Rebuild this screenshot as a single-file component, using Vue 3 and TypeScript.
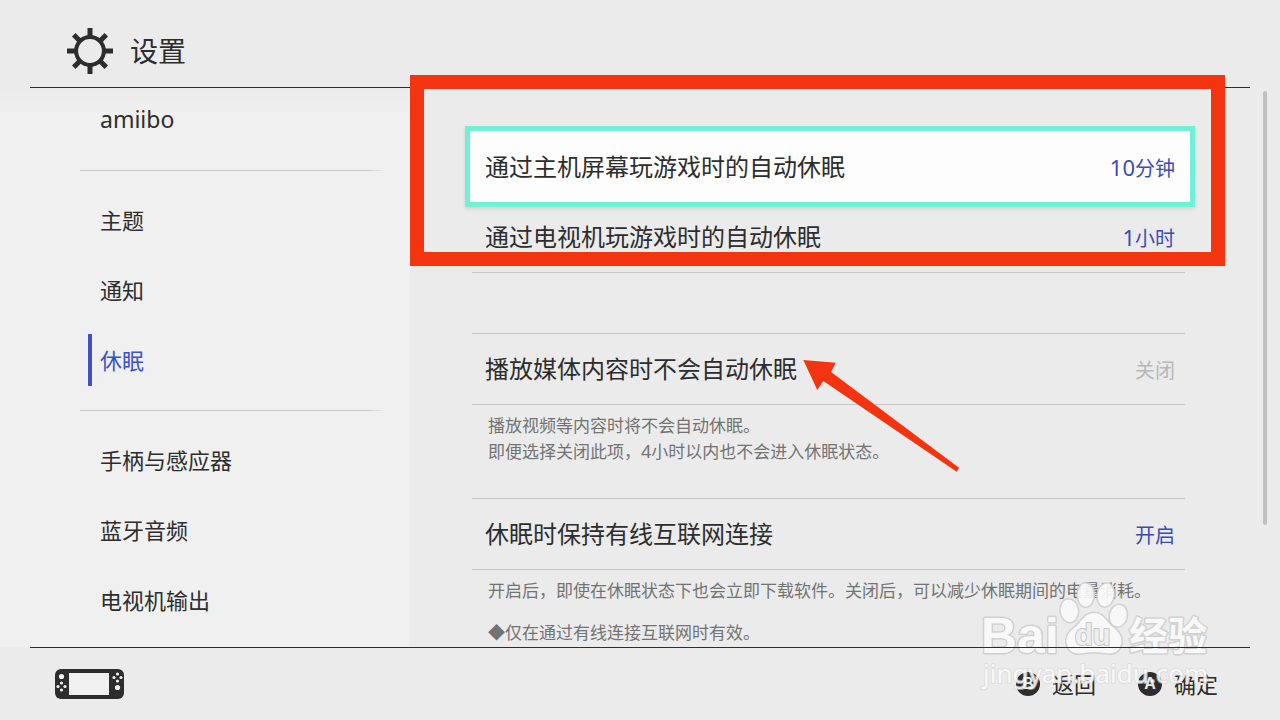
<script setup lang="ts">
interface NavGroup {
  items: { label: string; latin?: boolean; active?: boolean }[]
}

interface Setting {
  label: string
  amount?: string
  value: string
  off?: boolean
  focused?: boolean
  notes?: { before: string; digits?: string; after?: string }[]
  spaced?: boolean
}

const groups: NavGroup[] = [
  { items: [{ label: 'amiibo', latin: true }] },
  { items: [{ label: '主题' }, { label: '通知' }, { label: '休眠', active: true }] },
  { items: [{ label: '手柄与感应器' }, { label: '蓝牙音频' }, { label: '电视机输出' }] },
]

const plain: Setting[] = [
  { label: '通过主机屏幕玩游戏时的自动休眠', amount: '10', value: '分钟', focused: true },
  { label: '通过电视机玩游戏时的自动休眠', amount: '1', value: '小时' },
]

const explained: Setting[] = [
  {
    label: '播放媒体内容时不会自动休眠',
    value: '关闭',
    off: true,
    notes: [
      { before: '播放视频等内容时将不会自动休眠。' },
      { before: '即便选择关闭此项，', digits: '4', after: '小时以内也不会进入休眠状态。' },
    ],
  },
  {
    label: '休眠时保持有线互联网连接',
    value: '开启',
    spaced: true,
    notes: [
      { before: '开启后，即使在休眠状态下也会立即下载软件。关闭后，可以减少休眠期间的电量消耗。' },
      { before: '◆仅在通过有线连接互联网时有效。' },
    ],
  },
]

const teeth = [0, 45, 90, 135, 180, 225, 270, 315]
</script>

<template>
  <div class="page">
    <header class="header">
      <svg class="gear" viewBox="-24 -24 48 48" aria-hidden="true">
        <circle r="13.9" fill="none" stroke="#2d2d2d" stroke-width="4" />
        <rect
          v-for="angle in teeth"
          :key="angle"
          x="-2.5"
          y="-23"
          width="5"
          height="8"
          fill="#2d2d2d"
          :transform="`rotate(${angle})`"
        />
      </svg>
      <h1 class="title">设置</h1>
    </header>

    <div class="body">
      <nav class="sidebar">
        <ul v-for="(group, g) in groups" :key="g" class="group">
          <li v-for="item in group.items" :key="item.label">
            <a href="#" class="nav-link" :class="{ active: item.active, latin: item.latin }"><span class="label">{{ item.label }}</span></a>
          </li>
        </ul>
      </nav>

      <main class="content">
        <ul class="rows">
          <li v-for="s in plain" :key="s.label">
            <button type="button" class="row" :class="{ focused: s.focused }">
              <span class="label">{{ s.label }}</span>
              <span class="value"><span class="amount">{{ s.amount }}</span>{{ s.value }}</span>
            </button>
          </li>
        </ul>
        <section v-for="s in explained" :key="s.label">
          <button type="button" class="row ruled">
            <span class="label">{{ s.label }}</span>
            <span class="value" :class="{ off: s.off }">{{ s.value }}</span>
          </button>
          <div class="notes" :class="{ spaced: s.spaced }">
            <p v-for="(n, i) in s.notes" :key="i">{{ n.before }}<span v-if="n.digits" class="digits">{{ n.digits }}</span>{{ n.after }}</p>
          </div>
        </section>
        <div class="frame"></div>
        <svg class="arrow" viewBox="803 359 158 114" aria-hidden="true">
          <path d="M803.3 360 L835.7 362.8 L831 372 L959 467.7 L956.7 471.7 L823.3 381 L817.3 390 Z" fill="#f43410" />
        </svg>
      </main>

      <div class="scroll"><div class="thumb"></div></div>
    </div>

    <footer class="footer">
      <svg class="console" viewBox="0 0 70 30" aria-hidden="true">
        <rect width="69" height="30" rx="6" fill="#2d2d2d" />
        <rect x="14" y="4" width="40" height="22" fill="#f0f0f0" />
        <g fill="#f0f0f0">
          <circle cx="6.5" cy="7.5" r="2.6" />
          <circle cx="6.5" cy="14" r="1.6" />
          <circle cx="6.5" cy="21" r="1.6" />
          <circle cx="3" cy="17.5" r="1.6" />
          <circle cx="10" cy="17.5" r="1.6" />
          <circle cx="62.5" cy="5" r="1.6" />
          <circle cx="62.5" cy="12" r="1.6" />
          <circle cx="59" cy="8.5" r="1.6" />
          <circle cx="66" cy="8.5" r="1.6" />
          <circle cx="62.5" cy="18.5" r="2.6" />
        </g>
      </svg>
      <div class="actions">
        <button type="button" class="action"><span class="key">B</span><span class="label">返回</span></button>
        <button type="button" class="action"><span class="key">A</span><span class="label">确定</span></button>
      </div>
    </footer>

    <svg class="watermark" viewBox="975 578 245 120" aria-hidden="true">
      <g class="mark">
        <text x="981" y="653" class="bold" font-size="50">Bai</text>
        <ellipse cx="1069.3" cy="610.7" rx="8.6" ry="11.3" transform="rotate(-8 1069.3 610.7)" />
        <ellipse cx="1085.7" cy="595" rx="8" ry="11.5" />
        <ellipse cx="1105.7" cy="595" rx="8" ry="11.5" transform="rotate(8 1105.7 595)" />
        <ellipse cx="1118.3" cy="615.7" rx="8.4" ry="10.8" transform="rotate(10 1118.3 615.7)" />
        <path d="M1094 613 C1084 613 1082 622 1074 628 C1067 633 1064 641 1069 649 C1075 657 1084 652 1094 652 C1104 652 1113 657 1119 649 C1124 641 1121 634 1114 628 C1106 622 1104 613 1094 613 Z" />
        <text x="1129" y="650" class="cjk" font-size="39">经验</text>
      </g>
      <text x="1075" y="645" class="du" font-size="29">du</text>
      <text x="983" y="683" class="url" font-size="26">jingyan.baidu.com</text>
    </svg>
  </div>
</template>

<style>
body {
  margin: 0;
}
</style>

<style scoped>
.page {
  position: relative;
  display: flex;
  flex-direction: column;
  min-height: 100vh;
  background: #ebebeb;
  color: #2d2d2d;
  font-family: "Noto Sans CJK SC", sans-serif;
}

ul {
  list-style: none;
  margin: 0;
  padding: 0;
}

button {
  border: 0;
  margin: 0;
  padding: 0;
  background: none;
  color: inherit;
  font: inherit;
  text-align: left;
}

.header {
  display: flex;
  align-items: center;
  gap: 16px;
  height: 88px;
  margin: 0 30px;
  padding: 15px 0 0 36px;
  box-sizing: border-box;
  border-bottom: 1px solid #2d2d2d;
}

.gear {
  width: 48px;
  height: 48px;
}

.title {
  margin: 0 0 2px;
  font-size: 28px;
  line-height: 40px;
  font-weight: 400;
}

.body {
  display: flex;
  flex: 1;
}

.sidebar {
  flex: 0 0 410px;
  box-sizing: border-box;
  padding: 6px 0 0;
  background: linear-gradient(#ebebeb, #f0f0f0 28px);
}

.group + .group::before {
  content: "";
  display: block;
  height: 1px;
  margin: 24px 24px 23px 80px;
  background: linear-gradient(90deg, #c8c8c8 94%, transparent);
}

.label {
  padding-bottom: 3px;
}

.nav-link {
  display: flex;
  align-items: center;
  height: 52px;
  margin-left: 88px;
  padding-left: 8px;
  border-left: 4px solid transparent;
  color: inherit;
  font-size: 22px;
  text-decoration: none;
}

li + li .nav-link {
  margin-top: 18px;
}

.nav-link.active {
  border-left-color: #3d50c8;
  color: #3d50c8;
}

.nav-link.latin {
  font-family: "Noto Sans", sans-serif;
  font-size: 23px;
}

.content {
  position: relative;
  flex: 1;
  padding: 43px 82px 0 62px;
}

.rows {
  margin-bottom: 60px;
}

.row {
  display: flex;
  align-items: center;
  justify-content: space-between;
  width: 100%;
  height: 71px;
  box-sizing: border-box;
  padding: 0 10px 0 13px;
  border-bottom: 1px solid #c6c6c6;
  font-size: 24px;
}

.row.ruled {
  height: 72px;
  border-top: 1px solid #c6c6c6;
}

.row.focused {
  width: auto;
  min-width: calc(100% + 7px);
  margin: 0 -5px 0 -2px;
  padding: 0 15px;
  border-bottom: 0;
  background: #fdfdfd;
  box-shadow: 0 0 0 5px #70f0d4, 0 2px 4px 5px rgba(0, 0, 0, 0.1);
}

.value {
  color: #3a4cb4;
  font-size: 20px;
}

.value.off {
  color: #b8b8b8;
}

.amount {
  font-family: "Noto Sans", sans-serif;
  font-size: 22px;
}

.notes {
  padding: 7px 0 34px 16px;
  color: #737373;
  font-size: 17px;
  line-height: 26px;
}

.notes.spaced {
  padding-bottom: 0;
}

.notes p {
  margin: 0;
  height: 26px;
  white-space: nowrap;
}

.notes.spaced p + p {
  margin-top: 16px;
}

.digits {
  font-family: "Noto Sans", sans-serif;
  font-size: 18px;
}

.frame {
  position: absolute;
  z-index: 1;
  top: -13px;
  left: 0;
  right: 42px;
  height: 191px;
  box-sizing: border-box;
  border: 14px solid #f43410;
  pointer-events: none;
}

.arrow {
  position: absolute;
  top: 271px;
  left: 393px;
  width: 158px;
  height: 114px;
  pointer-events: none;
}

.scroll {
  flex: 0 0 13px;
  padding-top: 3px;
}

.thumb {
  width: 4px;
  height: 434px;
  margin-left: -4px;
  border-radius: 2px;
  background: #c0c0c0;
}

.footer {
  position: relative;
  display: flex;
  align-items: center;
  justify-content: space-between;
  height: 73px;
  box-sizing: border-box;
  margin: 0 30px;
  padding: 1px 32px 0 25px;
}

.footer::before {
  content: "";
  position: absolute;
  z-index: 2;
  top: 0;
  left: 0;
  right: 0;
  height: 1px;
  background: #2d2d2d;
}

.console {
  width: 70px;
  height: 30px;
}

.actions {
  display: flex;
  gap: 42px;
}

.action {
  display: flex;
  align-items: center;
  gap: 12px;
  font-size: 22px;
}

.key {
  width: 24px;
  height: 24px;
  border-radius: 50%;
  background: #2d2d2d;
  color: #ebebeb;
  font-family: "Liberation Sans", sans-serif;
  font-size: 16px;
  line-height: 24px;
  font-weight: 700;
  text-align: center;
}

.watermark {
  position: absolute;
  z-index: 1;
  right: 60px;
  bottom: 22px;
  width: 245px;
  height: 120px;
  pointer-events: none;
}

.mark {
  fill: #fafafa;
  stroke: #cfcfcf;
  stroke-width: 3px;
  stroke-linejoin: round;
  paint-order: stroke;
  opacity: 0.9;
}

.bold {
  font-family: "Liberation Sans", sans-serif;
  font-weight: 700;
}

.cjk {
  font-family: "Noto Sans CJK SC", sans-serif;
  font-weight: 700;
}

.du {
  fill: #eeeeee;
  stroke: #c6c6c6;
  stroke-width: 2px;
  stroke-linejoin: round;
  paint-order: stroke;
  font-family: "Liberation Sans", sans-serif;
  font-weight: 700;
}

.url {
  fill: #fafafa;
  stroke: #d6d6d6;
  stroke-width: 2px;
  stroke-linejoin: round;
  stroke-opacity: 0.7;
  paint-order: stroke;
  opacity: 0.9;
  font-family: "Noto Sans", sans-serif;
}
</style>
